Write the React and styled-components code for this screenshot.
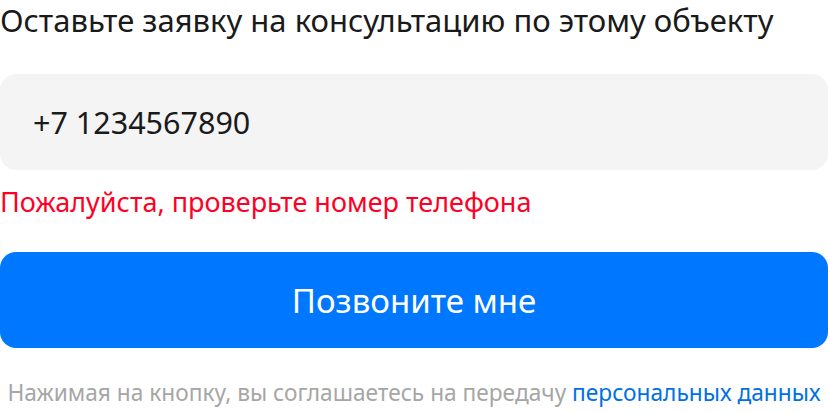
import React from "react";
import styled, { createGlobalStyle } from "styled-components";

const Global = createGlobalStyle`
  html, body { margin: 0; padding: 0; background: #fff; }
  body { font-family: "Noto Sans", "Open Sans", sans-serif; }
`;

const Form = styled.div`
  width: 828px;
  display: flex;
  flex-direction: column;
`;

const Title = styled.h2`
  margin: 0;
  font-size: 31px;
  font-weight: 400;
  line-height: 40px;
  color: #1a1a1a;
  white-space: nowrap;
`;

const Field = styled.div`
  margin-top: 34px;
  height: 96px;
  border-radius: 16px;
  background: #f4f4f4;
  display: flex;
  align-items: center;
  padding: 0 33px;
  font-size: 30.5px;
  color: #1a1a1a;
`;

const Error = styled.div`
  margin-top: 14px;
  font-size: 27px;
  line-height: 36px;
  color: #ff0025;
  white-space: nowrap;
`;

const Button = styled.button`
  margin-top: 32px;
  height: 96px;
  border: 0;
  border-radius: 16px;
  background: #0077ff;
  color: #fff;
  font-family: inherit;
  font-size: 33px;
  display: flex;
  align-items: center;
  justify-content: center;
`;

const Note = styled.p`
  margin: 30px 0 0;
  font-size: 22.7px;
  line-height: 30px;
  color: #a6a6a6;
  text-align: center;
  white-space: nowrap;
`;

const Link = styled.a`
  color: #0070e6;
  text-decoration: none;
`;

export default function App() {
  return (
    <>
      <Global />
      <Form>
        <Title>Оставьте заявку на консультацию по этому объекту</Title>
        <Field>+7 1234567890</Field>
        <Error>Пожалуйста, проверьте номер телефона</Error>
        <Button>Позвоните мне</Button>
        <Note>
          Нажимая на кнопку, вы соглашаетесь на передачу <Link href="#">персональных данных</Link>
        </Note>
      </Form>
    </>
  );
}
